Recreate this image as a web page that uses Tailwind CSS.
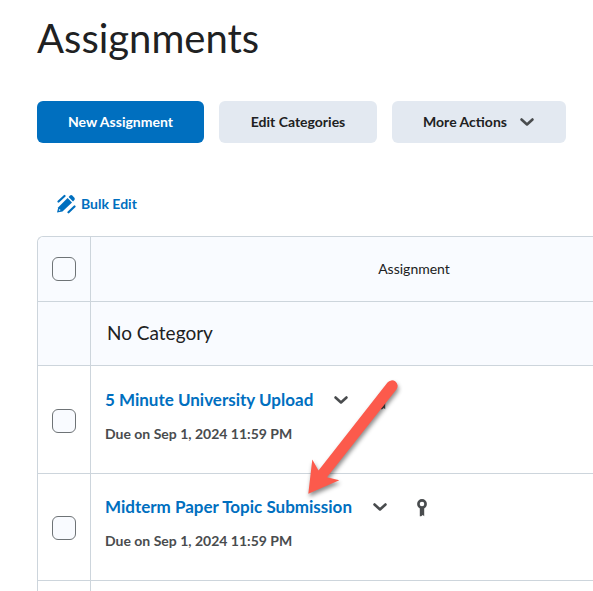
<!DOCTYPE html>
<html lang="en">
<head>
    <meta charset="UTF-8">
    <meta name="viewport" content="width=device-width, initial-scale=1.0">
    <title>Assignments</title>
    <script src="https://cdn.jsdelivr.net/npm/@tailwindcss/browser@4"></script>
</head>
<body class="bg-white font-['Lato',sans-serif] text-[#202122] overflow-x-hidden">

    <main class="relative pl-[37px] pt-3">
        <h1 class="text-[40px] leading-[52px]">Assignments</h1>

        <!-- Actions -->
        <div class="mt-[37px] flex gap-[15px] text-sm font-bold">
            <button type="button" class="h-[42px] w-[167px] rounded-md bg-[#006fbf] text-white">New Assignment</button>
            <button type="button" class="h-[42px] w-[158px] rounded-md bg-[#e3e9f1]">Edit Categories</button>
            <button type="button" class="flex h-[42px] w-[174px] items-center justify-center gap-3 rounded-md bg-[#e3e9f1]">
                More Actions
                <svg class="size-4" viewBox="0 0 16 16" fill="none" stroke="#494c4e" stroke-width="2.6" stroke-linecap="round" stroke-linejoin="round"><path d="M2.5 5.5 8 10.5l5.5-5"/></svg>
            </button>
        </div>

        <!-- Bulk edit -->
        <div class="mt-[51px] ml-5 flex h-5">
            <a href="#" class="flex items-center gap-1 text-sm leading-5 font-bold text-[#006fbf]">
                <svg class="size-5" viewBox="1 0 20 20" fill="#006fbf">
                    <path d="M1 18.500 2.300 13.200 11.600 4l4.400 4.400L6.500 17.400z"/>
                    <path d="m12.600 3 1.400-1.400q1.200-1 2.300 0l2.100 2.100q1 1.200 0 2.300L17 7.400z"/>
                    <path d="M2.500 7.500 8.500 2M12.500 18.300 18.500 12.500" stroke="#006fbf" stroke-width="2.200" stroke-linecap="round"/>
                    <circle cx="3.600" cy="16" r=".8" fill="#fff"/>
                </svg>
                Bulk Edit
            </a>
        </div>

        <!-- Assignment list -->
        <table class="mt-[22px] w-full table-fixed border-separate border-spacing-0 rounded-tl-md border-t border-l border-[#cdd5dc]">
            <colgroup>
                <col class="w-[53px]">
                <col>
            </colgroup>
            <thead>
                <tr class="h-[65px] bg-[#f9fbff]">
                    <th class="rounded-tl-md border-r border-b border-[#cdd5dc]">
                        <input type="checkbox" aria-label="Select all" class="mx-auto block size-6 appearance-none rounded-md border border-[#6e7376] bg-[#f9fbff]">
                    </th>
                    <th class="border-b border-[#cdd5dc] pl-36 text-center text-sm font-normal">Assignment</th>
                </tr>
            </thead>
            <tbody>
                <tr class="h-16 bg-[#f9fbff]">
                    <td class="border-r border-b border-[#cdd5dc]"></td>
                    <th class="border-b border-[#cdd5dc] pl-4 text-left text-[19px] font-normal">No Category</th>
                </tr>
                <tr class="h-[108px]">
                    <td class="border-r border-b border-[#cdd5dc] pt-0.5">
                        <input type="checkbox" aria-label="Select 5 Minute University Upload" class="mx-auto block size-6 appearance-none rounded-md border border-[#6e7376] bg-[#f9fbff]">
                    </td>
                    <td class="border-b border-[#cdd5dc] pb-2 pl-3.5">
                        <div class="flex items-center gap-5">
                            <a href="#" class="text-[17px] leading-6 font-bold text-[#006fbf]">5 Minute University Upload</a>
                            <button type="button" aria-label="Actions for 5 Minute University Upload">
                                <svg class="size-4" viewBox="0 0 16 16" fill="none" stroke="#494c4e" stroke-width="2.6" stroke-linecap="round" stroke-linejoin="round"><path d="M2.5 5.5 8 10.5l5.5-5"/></svg>
                            </button>
                            <svg class="ml-1.5 h-5 w-4" viewBox="0 0 16 20" fill="#494c4e"><circle cx="8" cy="7" r="3.600" fill="none" stroke="#494c4e" stroke-width="2.600"/><path d="M5.800 11h4.400v8.300L8.800 18.100 7.200 19.300H5.800z"/></svg>
                        </div>
                        <p class="mt-3 text-sm leading-5 font-bold text-[#494c4e]">Due on Sep 1, 2024 11:59 PM</p>
                    </td>
                </tr>
                <tr class="h-[107px]">
                    <td class="border-r border-b border-[#cdd5dc] pt-0.5">
                        <input type="checkbox" aria-label="Select Midterm Paper Topic Submission" class="mx-auto block size-6 appearance-none rounded-md border border-[#6e7376] bg-[#f9fbff]">
                    </td>
                    <td class="border-b border-[#cdd5dc] pb-2 pl-3.5">
                        <div class="flex items-center gap-5">
                            <a href="#" class="text-[17px] leading-6 font-bold text-[#006fbf]">Midterm Paper Topic Submission</a>
                            <button type="button" aria-label="Actions for Midterm Paper Topic Submission">
                                <svg class="size-4" viewBox="0 0 16 16" fill="none" stroke="#494c4e" stroke-width="2.6" stroke-linecap="round" stroke-linejoin="round"><path d="M2.5 5.5 8 10.5l5.5-5"/></svg>
                            </button>
                            <svg class="ml-1.5 h-5 w-4" viewBox="0 0 16 20" fill="#494c4e"><circle cx="8" cy="7" r="3.600" fill="none" stroke="#494c4e" stroke-width="2.600"/><path d="M5.800 11h4.400v8.300L8.800 18.100 7.200 19.300H5.800z"/></svg>
                        </div>
                        <p class="mt-3 text-sm leading-5 font-bold text-[#494c4e]">Due on Sep 1, 2024 11:59 PM</p>
                    </td>
                </tr>
                <tr class="h-2.5">
                    <td class="border-r border-[#cdd5dc]"></td>
                    <td></td>
                </tr>
            </tbody>
        </table>

        <!-- Pointer to the midterm link -->
        <svg class="pointer-events-none absolute top-[374px] left-[300px] h-[126px] w-[106px] drop-shadow-[1px_3px_2px_rgba(0,0,0,0.45)]" viewBox="300 374 106 126" fill="#fc5a4c">
            <path d="M308.300 493.700 312.300 459.500 318.500 470.500 387.500 382.500A5.500 5.500 0 0 1 396.400 389.500L327 477.200 339.300 480.300z"/>
        </svg>
    </main>

</body>
</html>
